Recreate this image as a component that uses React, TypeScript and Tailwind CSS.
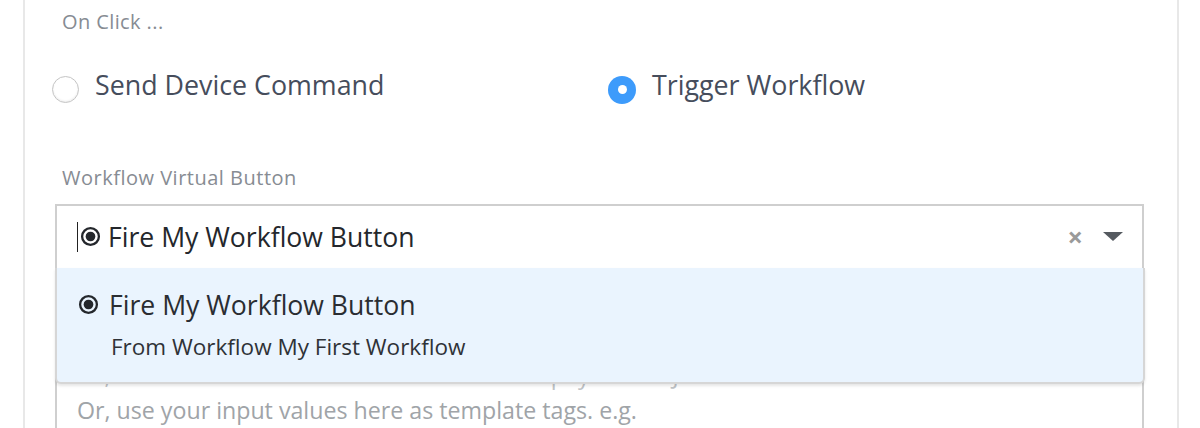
import React from 'react';

const RadioDotIcon = ({ className = '' }: { className?: string }) => (
  <svg viewBox="0 0 20 20" className={className}>
    <circle cx="10" cy="10" r="8" fill="none" stroke="currentColor" strokeWidth="2.2" />
    <circle cx="10" cy="10" r="4.6" fill="currentColor" />
  </svg>
);

const Radio = ({ checked, label }: { checked?: boolean; label: string }) => (
  <label className="flex items-center gap-[16px]">
    {checked ? (
      <span className="flex h-[28px] w-[28px] items-center justify-center rounded-full bg-[#3d9bfb]">
        <span className="h-[9px] w-[9px] rounded-full bg-white" />
      </span>
    ) : (
      <span className="h-[27px] w-[27px] rounded-full border border-[#c4c4c4] bg-white shadow-[inset_0_-1px_2px_rgba(0,0,0,0.08)]" />
    )}
    <span className="mb-[9px] text-[26.8px] leading-none text-[#464d5c]">{label}</span>
  </label>
);

export default function App() {
  return (
    <div
      className="flex h-[428px] w-[1200px] overflow-hidden bg-white"
      style={{ fontFamily: '"Open Sans", "Noto Sans", sans-serif' }}
    >
      <div className="w-[23px] shrink-0" />
      <div className="w-[1156px] shrink-0 border-x-2 border-[#e8e8e8] pl-[30px]">
        <div className="w-[1090px]">
          <div className="pl-[7px] pt-[9px] text-[20px] leading-[26px] tracking-[0.4px] text-[#878c93]">On Click ...</div>

          <div className="mt-[37px] flex items-center">
            <div className="-ml-[3px] w-[556px]">
              <Radio label="Send Device Command" />
            </div>
            <Radio checked label="Trigger Workflow" />
          </div>

          <div className="mt-[57px] pl-[7px] text-[20px] leading-[26px] tracking-[0.5px] text-[#878c93]">Workflow Virtual Button</div>

          <div className="relative mt-[13px]">
            <div className="flex h-[66px] w-[1089px] items-center border-2 border-[#cfcfcf] bg-white pl-[20px] pr-[19px]">
              <span className="h-[30px] w-px bg-[#222]" />
              <RadioDotIcon className="ml-[2px] h-[21px] w-[21px] text-[#24272c]" />
              <span className="ml-[7px] text-[26.6px] leading-none text-[#24272c]">Fire My Workflow Button</span>
              <span className="ml-auto text-[27px] font-bold leading-none text-[#9a9a9a]">×</span>
              <span className="ml-[20px] h-0 w-0 border-x-[10px] border-t-[9px] border-x-transparent border-t-[#555a60]" />
            </div>

            <div className="h-[200px] w-[1089px] border-x-2 border-[#cfcfcf] pl-[20px] pt-[90px] text-[23.2px] leading-[31px] text-[#a0a4a8]">
              <div className="text-[#c0c3c6]">Or, add custom data to send with the event payload as JSON</div>
              <div className="mt-[4px]">Or, use your input values here as template tags. e.g.</div>
            </div>

            <div className="absolute left-0 top-[64px] h-[116px] w-[1090px] rounded-b-[6px] border-2 border-t-0 border-[#d6d6d6] bg-[#eaf4fe] pl-[21px] pt-[20px] shadow-[0_2px_3px_rgba(0,0,0,0.1)]">
              <div className="flex items-center">
                <RadioDotIcon className="h-[21px] w-[21px] text-[#24272c]" />
                <span className="ml-[10px] text-[26.6px] leading-[34px] text-[#2a2d32]">Fire My Workflow Button</span>
              </div>
              <div className="mt-[10px] pl-[33px] text-[22.5px] leading-[30px] text-[#2f3237]">From Workflow My First Workflow</div>
            </div>
          </div>
        </div>
      </div>
    </div>
  );
}
